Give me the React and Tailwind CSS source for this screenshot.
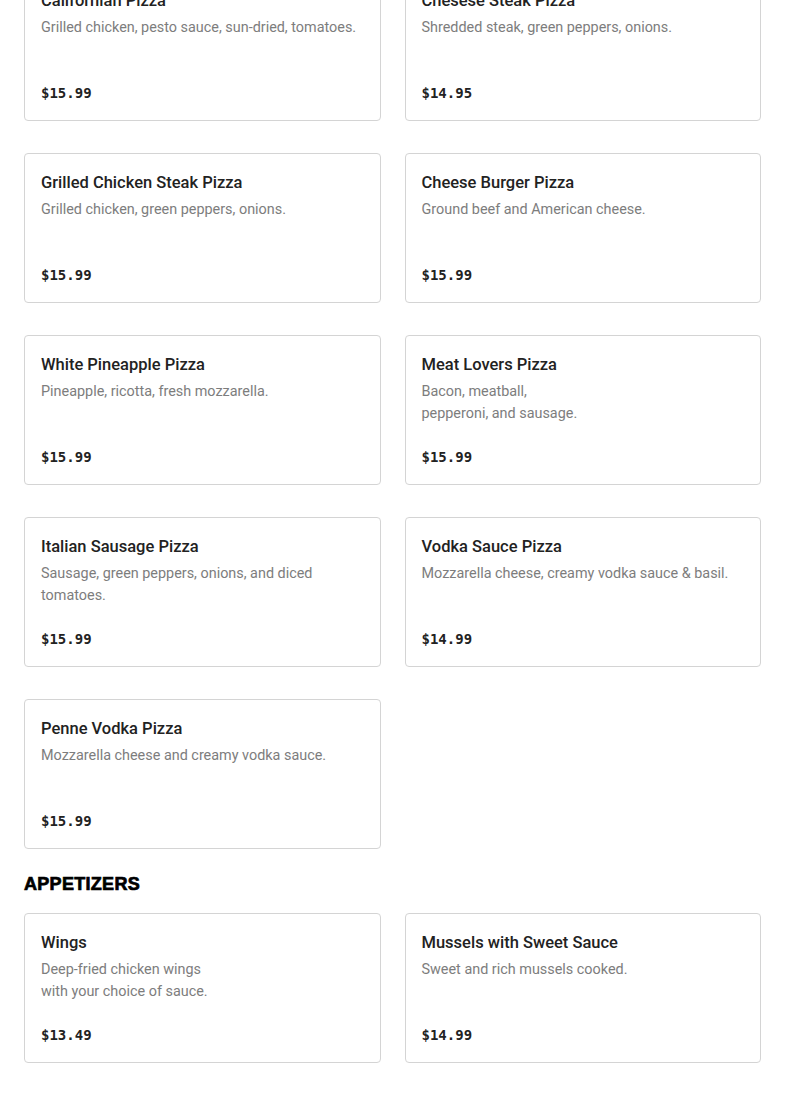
import React from "react";

const pizzas = [
  { name: "Californian Pizza", desc: ["Grilled chicken, pesto sauce, sun-dried, tomatoes."], price: "$15.99" },
  { name: "Chesese Steak Pizza", desc: ["Shredded steak, green peppers, onions."], price: "$14.95" },
  { name: "Grilled Chicken Steak Pizza", desc: ["Grilled chicken, green peppers, onions."], price: "$15.99" },
  { name: "Cheese Burger Pizza", desc: ["Ground beef and American cheese."], price: "$15.99" },
  { name: "White Pineapple Pizza", desc: ["Pineapple, ricotta, fresh mozzarella."], price: "$15.99" },
  { name: "Meat Lovers Pizza", desc: ["Bacon, meatball,", "pepperoni, and sausage."], price: "$15.99" },
  { name: "Italian Sausage Pizza", desc: ["Sausage, green peppers, onions, and diced tomatoes."], price: "$15.99" },
  { name: "Vodka Sauce Pizza", desc: ["Mozzarella cheese, creamy vodka sauce & basil."], price: "$14.99" },
  { name: "Penne Vodka Pizza", desc: ["Mozzarella cheese and creamy vodka sauce."], price: "$15.99" },
];

const apps = [
  { name: "Wings", desc: ["Deep-fried chicken wings", "with your choice of sauce."], price: "$13.49" },
  { name: "Mussels with Sweet Sauce", desc: ["Sweet and rich mussels cooked."], price: "$14.99" },
  { name: "Mozzarella Sticks", desc: ["Breaded mozzarella with marinara."], price: "$9.99" },
  { name: "Garlic Knots", desc: ["Fresh baked knots with garlic butter."], price: "$6.99" },
];

function Card({ item }) {
  return (
    <div className="h-[150px] border border-[#d4d4d4] rounded-[4px] bg-white px-4 pt-[17px] pb-[15px] flex flex-col justify-between">
      <div>
        <div className="text-[16.5px] leading-6 font-medium text-[#222222] font-['Roboto',sans-serif]">{item.name}</div>
        <div className="mt-1 text-[14.4px] leading-[22px] text-[#7d7d7d] font-['Roboto',sans-serif]">
          {item.desc.map((d, i) => (
            <div key={i}>{d}</div>
          ))}
        </div>
      </div>
      <div className="text-[14px] leading-6 font-bold text-[#222222] font-['DejaVu_Sans_Mono',monospace]">{item.price}</div>
    </div>
  );
}

export default function App() {
  return (
    <div className="bg-white min-h-screen overflow-hidden">
      <div className="px-6 -mt-[29px]">
        <div className="grid grid-cols-2 gap-x-6 gap-y-8">
          {pizzas.map((p) => (
            <Card key={p.name} item={p} />
          ))}
        </div>
        <h2 className="mt-[23px] text-[18px] leading-6 font-bold text-black tracking-[0.3px] [-webkit-text-stroke:0.7px_black] font-['Liberation_Sans',sans-serif]">APPETIZERS</h2>
        <div className="mt-[17px] grid grid-cols-2 gap-x-6 gap-y-8">
          {apps.map((p) => (
            <Card key={p.name} item={p} />
          ))}
        </div>
      </div>
    </div>
  );
}
